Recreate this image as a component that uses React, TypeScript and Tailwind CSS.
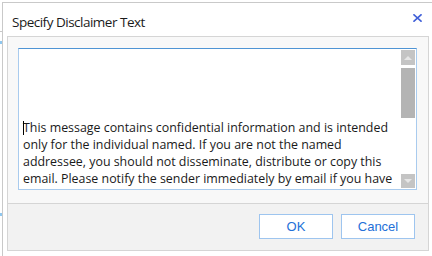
import { useState } from 'react';

const disclaimerLines = [
  'This message contains confidential information and is intended',
  'only for the individual named. If you are not the named',
  'addressee, you should not disseminate, distribute or copy this',
  'email. Please notify the sender immediately by email if you have',
];

function CloseIcon() {
  return (
    <svg width="9" height="8" viewBox="0 0 9 8" className="block">
      <path d="M1 0.8 L8 7.2 M8 0.8 L1 7.2" stroke="#3f5fd8" strokeWidth="1.6" strokeLinecap="square" />
    </svg>
  );
}

function Scrollbar() {
  return (
    <div className="flex w-[14px] shrink-0 flex-col py-[1px] mr-[1px]">
      {/* up arrow */}
      <div className="flex h-[15px] items-center justify-center bg-[#c4c4c4]">
        <svg width="8" height="4" viewBox="0 0 8 4">
          <path d="M0 4 L4 0 L8 4 Z" fill="#e6e6e6" />
        </svg>
      </div>
      <div className="mt-[3px] h-[50px] bg-[#b4b4b4]" />
      <div className="flex-1" />
      {/* down arrow */}
      <div className="flex h-[14px] items-center justify-center bg-[#c4c4c4]">
        <svg width="8" height="4" viewBox="0 0 8 4">
          <path d="M0 0 L4 4 L8 0 Z" fill="#e6e6e6" />
        </svg>
      </div>
    </div>
  );
}

export default function App() {
  const [text] = useState(disclaimerLines);

  return (
    <div className="relative h-[256px] w-[432px] overflow-hidden bg-white pl-[2px] pt-[2px]">
      {/* bits of the page behind the dialog */}
      <div className="absolute left-0 top-[41px] h-[3px] w-[2px] bg-[#8fc7ef]" />
      <div className="absolute left-0 top-[31px] h-[1px] w-[2px] bg-[#c8c8c8]" />
      <div className="absolute left-0 top-[213px] h-[3px] w-[2px] bg-[#8fc7ef]" />

      <div className="flex h-[254px] flex-col border-l border-t border-[#c9c9c9] bg-white">
        {/* title bar */}
        <div className="flex h-[33px] items-start justify-between pl-[9px] pr-[10px]">
          <div className="pt-[10px] text-[13.5px] leading-[18px] tracking-[-0.5px] text-[#1b1b1b] [font-family:'Open_Sans',sans-serif]">
            Specify Disclaimer Text
          </div>
          <div className="pt-[11px]">
            <CloseIcon />
          </div>
        </div>

        {/* content panel */}
        <div className="ml-[4px] mr-[3px] flex h-[215px] flex-col border border-[#d5d5d5]">
          <div className="flex-1 bg-[#f8f8f8] pl-[10px] pr-[11px] pt-[11px]">
            <div className="flex h-[142px] border border-[#a9cbee] border-t-[#4f94d4] bg-white">
              <div className="relative flex-1 overflow-hidden pl-[4px] pt-[2px] text-[12.4px] leading-[17px] text-[#1a1a1a] [font-family:'Open_Sans',sans-serif]">
                <div className="h-[68px]" />
                <div className="relative whitespace-nowrap">
                  <span className="absolute left-[0px] top-[2px] h-[14px] w-[1px] bg-black" />
                  {text.map((line) => (
                    <div key={line}>{line}</div>
                  ))}
                </div>
              </div>
              <Scrollbar />
            </div>
          </div>

          {/* footer */}
          <div className="flex h-[47px] justify-end gap-[8px] border-t border-[#d5d5d5] bg-[#f2f2f2] pr-[13px] pt-[10px]">
            <button className="h-[25px] w-[74px] border border-[#9ec5ef] bg-white text-[13px] text-[#2370d8] [font-family:'Liberation_Sans',Arial,sans-serif]">
              OK
            </button>
            <button className="h-[25px] w-[74px] border border-[#9ec5ef] bg-white text-[13px] text-[#2370d8] [font-family:'Liberation_Sans',Arial,sans-serif]">
              Cancel
            </button>
          </div>
        </div>
      </div>
    </div>
  );
}
